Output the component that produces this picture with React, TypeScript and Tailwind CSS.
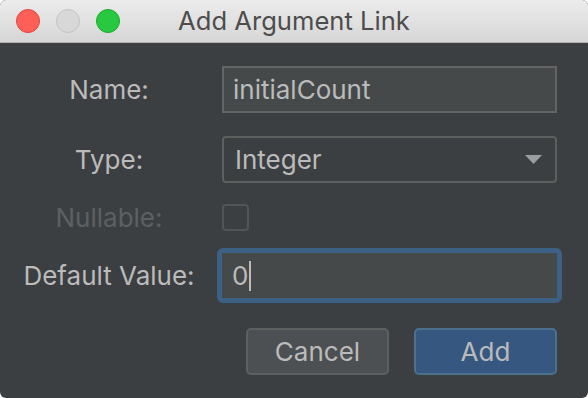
const fontStack = { fontFamily: 'Inter, "Noto Sans", sans-serif' };

const TrafficLights = () => (
  <div className="flex items-center gap-4 pl-4">
    <span className="w-6 h-6 rounded-full bg-[#fe5f57] border border-[#e0443e]" />
    <span className="w-6 h-6 rounded-full bg-[#d8d8d8] border border-[#c4c4c4]" />
    <span className="w-6 h-6 rounded-full bg-[#28c840] border border-[#1aab29]" />
  </div>
);

const Label = ({ children, disabled }: { children: string; disabled?: boolean }) => (
  <div className={`w-[218px] shrink-0 text-center leading-none ${disabled ? 'text-[#5d6062]' : 'text-[#bbbbbb]'}`}>
    {children}
  </div>
);

export default function App() {
  return (
    <div className="w-[588px] h-[398px] bg-white text-[26px] leading-none" style={fontStack}>
      <div className="w-full h-full rounded-[6px] overflow-hidden flex flex-col bg-[#3c3f41]">
        {/* Title bar */}
        <div className="relative h-[43px] shrink-0 flex items-center bg-gradient-to-b from-[#ececec] to-[#d6d6d6] border-b border-[#b1b1b1]">
          <TrafficLights />
          <div className="absolute inset-0 flex items-center justify-center text-[#4d4d4d] text-[25.6px]">
            Add Argument Link
          </div>
        </div>

        {/* Form */}
        <div className="flex flex-col pr-[31px]">
          <div className="flex items-center h-[47px] mt-[23px]">
            <Label>Name:</Label>
            <div className="ml-1 flex-1 h-full bg-[#45494a] border-2 border-[#646464] flex items-center px-[9px] text-[#bbbbbb]">
              initialCount
            </div>
          </div>

          <div className="flex items-center h-[47px] mt-[23px]">
            <Label>Type:</Label>
            <div className="ml-1 flex-1 h-full border-2 border-[#5e6060] rounded-[4px] flex items-center justify-between pl-[11px] pr-[13px] text-[#bbbbbb]">
              <span>Integer</span>
              <svg width="17" height="10" viewBox="0 0 17 10">
                <path d="M0 0 H17 L8.5 9 Z" fill="#9a9da1" />
              </svg>
            </div>
          </div>

          <div className="flex items-center h-[27px] mt-[21px]">
            <Label disabled>Nullable:</Label>
            <div className="ml-1 w-[27px] h-[27px] rounded-[4px] border-2 border-[#525557]" />
          </div>

          <div className="flex items-center h-[45px] mt-[22px]">
            <Label>Default Value:</Label>
            <div className="ml-1 flex-1 h-full bg-[#45494a] rounded-[1px] outline-[5px] outline-solid outline-[#3d6185] flex items-center px-[10px] text-[#bbbbbb]">
              <span>0</span>
              <span className="w-[2px] h-[30px] bg-[#bbbbbb] ml-[1px]" />
            </div>
          </div>

          <div className="flex justify-end gap-[25px] h-[47px] mt-[30px]">
            <button className="w-[143px] h-full rounded-[5px] bg-[#4c5052] border-2 border-[#5e6060] text-[#bbbbbb]">
              Cancel
            </button>
            <button className="w-[143px] h-full rounded-[5px] bg-[#365880] border-2 border-[#4c708c] text-[#bbbbbb]">
              Add
            </button>
          </div>
        </div>
      </div>
    </div>
  );
}
